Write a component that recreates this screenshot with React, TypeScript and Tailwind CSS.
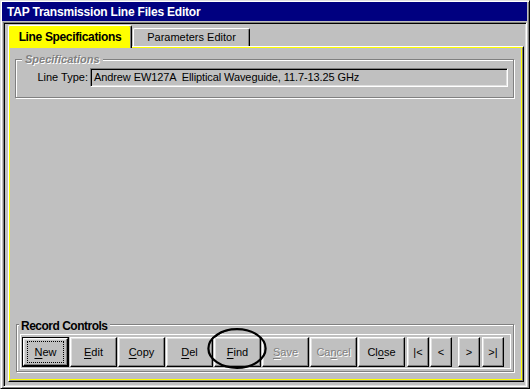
import React from "react";

const raised =
  "bg-[#c0c0c0] border border-t-white border-l-white border-r-black border-b-black shadow-[inset_-1px_-1px_0_#808080,inset_1px_1px_0_#dfdfdf]";

function Label({ text, at }: { text: string; at?: number }) {
  if (at === undefined) return <>{text}</>;
  return (
    <>
      {text.slice(0, at)}
      <span className="underline underline-offset-[2px]">{text[at]}</span>
      {text.slice(at + 1)}
    </>
  );
}

type BtnProps = {
  text: string;
  at?: number;
  narrow?: boolean;
  disabled?: boolean;
  isDefault?: boolean;
  className?: string;
};

function Button({ text, at, narrow, disabled, isDefault, className = "" }: BtnProps) {
  const size = narrow ? "w-[22px]" : "w-[47px]";
  const tone = disabled ? "text-[#808080] [text-shadow:1px_1px_0_#fff]" : "text-black";

  if (isDefault) {
    return (
      <div className={`${size} h-[30px] shrink-0 border border-black ${className}`}>
        <div className={`relative h-full w-full ${raised} flex items-center justify-center text-[11px] ${tone}`}>
          <span className="absolute inset-x-[3px] inset-y-[2px] border border-dotted border-black" />
          <Label text={text} at={at} />
        </div>
      </div>
    );
  }

  return (
    <div className={`${size} h-[30px] shrink-0 ${raised} flex items-center justify-center text-[11px] ${tone} ${className}`}>
      <Label text={text} at={at} />
    </div>
  );
}

export default function App() {
  return (
    <div className="font-['Liberation_Sans',Arial,Helvetica,sans-serif] w-[530px] h-[389px] bg-[#c0c0c0] flex flex-col border border-t-[#dfdfdf] border-l-[#dfdfdf] border-r-black border-b-black shadow-[inset_1px_1px_0_#fff,inset_-1px_-1px_0_#808080] pt-[1px] pl-[1px] pr-[2px] pb-[1px] overflow-hidden select-none">
      {/* title bar */}
      <div className="h-[19px] shrink-0 bg-[#000080] text-white text-[12px] font-bold tracking-[-0.2px] pl-[5px] flex items-center">
        TAP Transmission Line Files Editor
      </div>

      {/* client area */}
      <div className="mt-[1px] ml-[1px] flex-1 min-h-0 flex flex-col border border-t-[#808080] border-l-[#808080] border-r-white border-b-white shadow-[inset_1px_1px_0_#000,inset_-1px_-1px_0_#dfdfdf] pt-[2px] pl-[4px] pr-[2px] pb-[4px]">
        {/* tabs */}
        <div className="flex items-end h-[21px] shrink-0">
          <div className="relative z-10 h-[23px] w-[124px] -mb-[2px] bg-[#ffff00] border-l border-t border-r border-l-white border-t-white border-r-black shadow-[inset_-1px_0_0_#808080] rounded-t-[2px] flex justify-center pt-[4px] text-[12px] leading-[14px] font-bold tracking-[-0.35px] text-black">
            Line Specifications
          </div>
          <div className="ml-[1px] h-[18px] w-[117px] bg-[#c0c0c0] border-l border-t border-r border-l-white border-t-white border-r-black shadow-[inset_-1px_0_0_#808080] rounded-t-[2px] flex justify-center pt-[2px] text-[11px] leading-[13px] text-black">
            Parameters Editor
          </div>
        </div>

        {/* tab page */}
        <div className="flex-1 min-h-0 flex flex-col border border-t-white border-l-white border-r-black border-b-black">
          <div className="flex-1 min-h-0 flex flex-col border border-t-[#ffff00] border-l-[#ffff00] border-r-[#808080] border-b-[#808080]">
            <div className="flex-1 min-h-0 flex flex-col border border-t-transparent border-l-transparent border-r-[#ffff00] border-b-[#ffff00]">
              {/* Specifications */}
              <fieldset className="mt-[4px] ml-[4px] mr-[7px] border border-[#808080] shadow-[inset_1px_1px_0_#fff,1px_1px_0_#fff] pb-[10px]">
                <legend className="ml-[6px] px-[3px] bg-[#c0c0c0] text-[11px] leading-[13px] font-bold italic text-[#808080] [text-shadow:1px_1px_0_#fff]">
                  Specifications
                </legend>
                <div className="mt-[2px] flex items-center">
                  <span className="w-[74px] pr-[2px] text-right text-[11px] leading-[13px] text-black">Line Type:</span>
                  <div className="flex-1 mr-[5px] h-[19px] border border-t-[#808080] border-l-[#808080] border-r-white border-b-white shadow-[inset_1px_1px_0_#000,inset_-1px_-1px_0_#dfdfdf] pl-[3px] flex items-center text-[11px] tracking-[-0.1px] text-black whitespace-pre">
                    Andrew EW127A  Elliptical Waveguide, 11.7-13.25 GHz
                  </div>
                </div>
              </fieldset>

              {/* Record Controls */}
              <fieldset className="mt-auto mb-[7px] ml-[5px] mr-[7px] border border-[#808080] shadow-[inset_1px_1px_0_#fff,1px_1px_0_#fff] pb-[2px]">
                <legend className="ml-[2px] px-[2px] pt-[4px] bg-[#c0c0c0] text-[12px] leading-[14px] font-bold tracking-[-0.5px] text-black">
                  Record Controls
                </legend>
                <div className="mt-[1px] ml-[3px] mr-[2px] border border-white pl-[1px] pt-[2px] pb-[1px] flex">
                  <div className="flex gap-[1px]">
                    <Button text="New" at={0} isDefault />
                    <Button text="Edit" at={0} />
                    <Button text="Copy" at={0} />
                    <Button text="Del" at={0} />
                    <div className="relative">
                      <Button text="Find" at={0} />
                      <svg
                        className="absolute left-[-7px] top-[-9px] w-[60px] h-[41px] pointer-events-none overflow-visible"
                        viewBox="0 0 60 41"
                      >
                        <ellipse cx="30" cy="20.5" rx="28.6" ry="19.3" fill="none" stroke="#000" strokeWidth="2.2" />
                        <path d="M8 9 C12 5 17 3 22 2" fill="none" stroke="#000" strokeWidth="1.6" />
                      </svg>
                    </div>
                    <Button text="Save" at={0} disabled />
                    <Button text="Cancel" at={2} disabled />
                    <Button text="Close" at={2} />
                  </div>
                  <Button text="|<" narrow className="ml-[2px]" />
                  <Button text="<" narrow className="ml-[1px]" />
                  <Button text=">" narrow className="ml-[6px]" />
                  <Button text=">|" narrow className="ml-[2px]" />
                </div>
              </fieldset>
            </div>
          </div>
        </div>
      </div>
    </div>
  );
}
